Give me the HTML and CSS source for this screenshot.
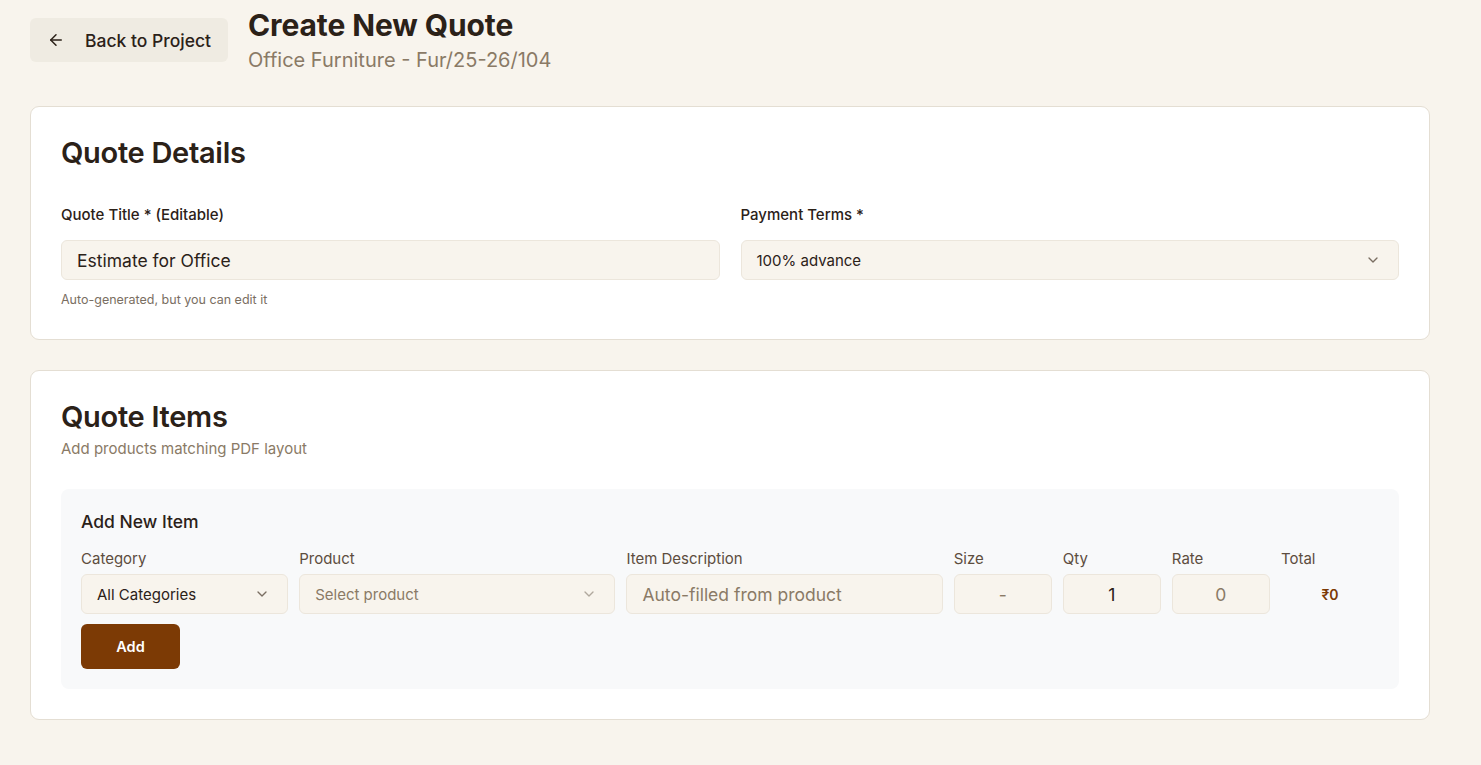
FILE: index.html
```html
<!DOCTYPE html>
<html lang="en">
<head>
<meta charset="utf-8">
<title>Create New Quote</title>
<link rel="stylesheet" href="styles.css">
</head>
<body>
<div class="page">
  <header class="top">
    <button class="back-btn">
      <svg width="18" height="18" viewBox="0 0 24 24" fill="none" stroke="currentColor" stroke-width="2" stroke-linecap="round" stroke-linejoin="round"><path d="M19 12H5"/><path d="M12 19l-7-7 7-7"/></svg>
      <span>Back to Project</span>
    </button>
    <div class="titles">
      <h1 class="page-title">Create New Quote</h1>
      <div class="page-sub">Office Furniture - Fur/25-26/104</div>
    </div>
  </header>

  <section class="card">
    <h2 class="card-title">Quote Details</h2>
    <div class="two-col">
      <div class="field">
        <label class="label">Quote Title * (Editable)</label>
        <div class="input input-lg">Estimate for Office</div>
        <div class="help">Auto-generated, but you can edit it</div>
      </div>
      <div class="field">
        <label class="label">Payment Terms *</label>
        <div class="input select">
          <span>100% advance</span>
          <svg class="chev" width="16" height="16" viewBox="0 0 24 24" fill="none" stroke="currentColor" stroke-width="2" stroke-linecap="round" stroke-linejoin="round"><path d="M6 9l6 6 6-6"/></svg>
        </div>
      </div>
    </div>
  </section>

  <section class="card">
    <h2 class="card-title">Quote Items</h2>
    <div class="card-desc">Add products matching PDF layout</div>
    <div class="add-box">
      <h3 class="add-title">Add New Item</h3>
      <div class="item-grid">
        <div class="cell span2">
          <div class="ilabel">Category</div>
          <div class="input select">
            <span>All Categories</span>
            <svg class="chev" width="16" height="16" viewBox="0 0 24 24" fill="none" stroke="currentColor" stroke-width="2" stroke-linecap="round" stroke-linejoin="round"><path d="M6 9l6 6 6-6"/></svg>
          </div>
        </div>
        <div class="cell span3">
          <div class="ilabel">Product</div>
          <div class="input select muted">
            <span>Select product</span>
            <svg class="chev faint" width="16" height="16" viewBox="0 0 24 24" fill="none" stroke="currentColor" stroke-width="2" stroke-linecap="round" stroke-linejoin="round"><path d="M6 9l6 6 6-6"/></svg>
          </div>
        </div>
        <div class="cell span3">
          <div class="ilabel">Item Description</div>
          <div class="input input-lg muted">Auto-filled from product</div>
        </div>
        <div class="cell">
          <div class="ilabel">Size</div>
          <div class="input input-lg center muted">-</div>
        </div>
        <div class="cell">
          <div class="ilabel">Qty</div>
          <div class="input input-lg center">1</div>
        </div>
        <div class="cell">
          <div class="ilabel">Rate</div>
          <div class="input input-lg center muted">0</div>
        </div>
        <div class="cell">
          <div class="ilabel">Total</div>
          <div class="total">₹0</div>
        </div>
      </div>
      <button class="add-btn">Add</button>
    </div>
  </section>
</div>
</body>
</html>
```

FILE: styles.css
```css
* { box-sizing: border-box; }
html, body { margin: 0; padding: 0; }
body {
  background: #f8f4ed;
  font-family: Inter, "Noto Sans", sans-serif;
  color: #2b2118;
}
.page {
  width: 1400px;
  margin-left: 30px;
  padding-top: 9px;
}
.top {
  display: flex;
  align-items: flex-start;
  gap: 20px;
  margin-bottom: 34px;
}
.back-btn {
  margin-top: 9px;
  height: 44px;
  width: 198px;
  display: flex;
  align-items: center;
  gap: 20px;
  padding: 0 14px 0 17px;
  border: none;
  border-radius: 6px;
  background: #efebe2;
  color: #2b2118;
  font-family: inherit;
  font-size: 17.5px;
  font-weight: 500;
}
.back-btn svg { flex: none; }
.titles { display: flex; flex-direction: column; }
.page-title {
  margin: 0;
  font-size: 30px;
  font-weight: 700;
  line-height: 32px;
  letter-spacing: -0.1px;
}
.page-sub {
  margin-top: 7px;
  font-size: 20px;
  color: #8a7a66;
  line-height: 24px;
}
.card {
  background: #fff;
  border: 1px solid #e4ded3;
  border-radius: 9px;
  padding: 30px;
  margin-bottom: 30px;
}
.card-title {
  margin: 0;
  font-size: 29px;
  font-weight: 600;
  line-height: 32px;
  letter-spacing: -0.3px;
}
.two-col {
  display: grid;
  grid-template-columns: 1fr 1fr;
  gap: 21px;
  margin-top: 36px;
}
.field { display: flex; flex-direction: column; }
.label {
  font-size: 15px;
  font-weight: 500;
  line-height: 20px;
  margin-bottom: 15px;
}
.input {
  height: 40px;
  display: flex;
  align-items: center;
  padding: 0 15px;
  background: #f8f4ed;
  border: 1px solid #ece6dc;
  border-radius: 6px;
  font-size: 15px;
  color: #2b2118;
}
.input-lg { font-size: 17.5px; }
.select { justify-content: space-between; padding-right: 17px; }
.chev { color: #7a6e62; flex: none; }
.chev.faint { color: #b0a89e; }
.muted { color: #8a7a66; }
.center { justify-content: center; }
.help {
  margin-top: 11px;
  font-size: 12.5px;
  color: #7a6e62;
  line-height: 18px;
}
.card-desc {
  margin-top: 6px;
  font-size: 15px;
  color: #8a7a66;
  line-height: 20px;
}
.add-box {
  margin-top: 30px;
  background: #f8f9fa;
  border-radius: 8px;
  padding: 20px;
}
.add-title {
  margin: 0;
  font-size: 17.5px;
  font-weight: 500;
  line-height: 24px;
  margin-top: 1px;
}
.item-grid {
  display: grid;
  grid-template-columns: repeat(12, 1fr);
  column-gap: 11px;
  margin-top: 15px;
}
.cell { display: flex; flex-direction: column; }
.span2 { grid-column: span 2; }
.span3 { grid-column: span 3; }
.ilabel {
  font-size: 15px;
  color: #5d4d3e;
  line-height: 20px;
  margin-bottom: 5px;
}
.total {
  height: 40px;
  display: flex;
  align-items: center;
  justify-content: center;
  font-size: 14px;
  font-weight: 600;
  color: #7c3a05;
}
.add-btn {
  margin-top: 10px;
  width: 99px;
  height: 45px;
  border: none;
  border-radius: 6px;
  background: #7c3a05;
  color: #fff;
  font-family: inherit;
  font-size: 14.5px;
  font-weight: 600;
}
```
